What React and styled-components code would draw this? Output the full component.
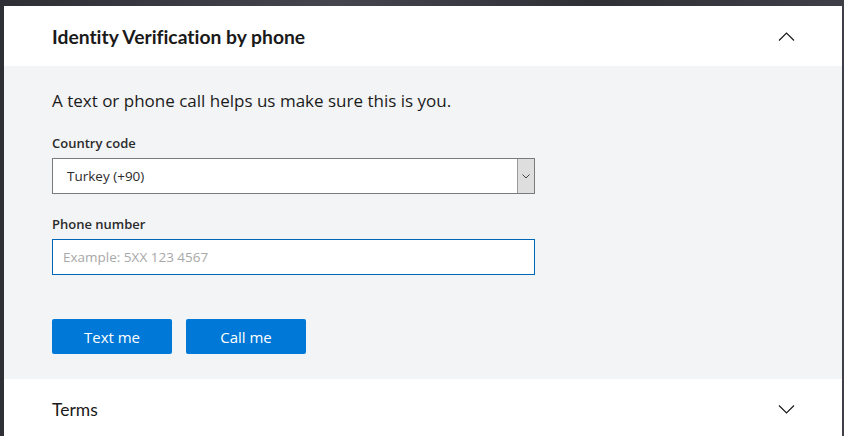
import React, { useState } from 'react'
import styled, { createGlobalStyle } from 'styled-components'

const GlobalStyle = createGlobalStyle`
  html, body {
    margin: 0;
    background: #34343c;
  }
  body {
    font-family: 'Open Sans', 'Noto Sans', sans-serif;
  }
`

const Page = styled.div`
  height: 436px;
  overflow: hidden;
  padding: 6px 2px 0 4px;
  background: linear-gradient(90deg, #2e2e35, #45454e 40%, #2f2f36 70%, #3f3f47);
`
const Panel = styled.section`
  background: #ffffff;
`
const SectionHeader = styled.button`
  all: unset;
  box-sizing: border-box;
  display: flex;
  align-items: center;
  justify-content: space-between;
  width: 100%;
  height: ${(p) => p.$height}px;
  padding: 0 47px 0 48px;
  cursor: pointer;
`
const HeaderTitle = styled.h2`
  margin: 0;
  font-family: 'Lato', sans-serif;
  font-size: ${(p) => (p.$bold ? 19.3 : 17.5)}px;
  font-weight: ${(p) => (p.$bold ? 700 : 400)};
  font-variant-ligatures: none;
  color: #1a1a1a;
`
const Body = styled.div`
  background: #f3f4f6;
  padding: 23px 48px 25px;
`
const Lead = styled.p`
  margin: 0 0 21px;
  font-size: 17px;
  line-height: 24px;
  color: #1b1b1b;
`
const Field = styled.div`
  display: flex;
  flex-direction: column;
  width: 483px;
  margin-bottom: ${(p) => p.$gap}px;
`
const Label = styled.label`
  font-size: 13px;
  font-weight: 600;
  color: #2b2b2b;
  margin-bottom: 6px;
`
const SelectBox = styled.div`
  box-sizing: border-box;
  display: flex;
  height: 36px;
  background: #ffffff;
  border: 1px solid #7a7a7a;
`
const SelectText = styled.span`
  flex: 1;
  display: flex;
  align-items: center;
  padding-left: 14px;
  font-size: 13.5px;
  color: #2b2b2b;
`
const SelectArrow = styled.span`
  display: flex;
  align-items: center;
  justify-content: center;
  width: 16px;
  background: #dedede;
  border-left: 1px solid #9a9a9a;
`
const Input = styled.input`
  box-sizing: border-box;
  height: 36px;
  padding: 0 10px;
  border: 1px solid #0067b8;
  border-radius: 0;
  outline: none;
  background: #ffffff;
  font-family: 'Open Sans', sans-serif;
  font-size: 13.5px;
  color: #1b1b1b;
  &::placeholder {
    color: #a8a8a8;
  }
`
const Actions = styled.div`
  display: flex;
  gap: 14px;
`
const Button = styled.button`
  all: unset;
  box-sizing: border-box;
  width: 120px;
  height: 35px;
  border-radius: 2px;
  background: #0078d7;
  color: #ffffff;
  font-size: 15px;
  text-align: center;
  cursor: pointer;
`

const Chevron = ({ up }) => (
  <svg width="17" height="9" viewBox="0 0 17 9" fill="none">
    <path
      d={up ? 'M1 8.5 L8.5 1 L16 8.5' : 'M1 0.5 L8.5 8 L16 0.5'}
      stroke="#1b1b1b"
      strokeWidth="1.2"
    />
  </svg>
)

const App = () => {
  const [phone, setPhone] = useState('')

  return (
    <>
      <GlobalStyle />
      <Page>
        <Panel>
          <SectionHeader $height={60}>
            <HeaderTitle $bold>Identity Verification by phone</HeaderTitle>
            <Chevron up />
          </SectionHeader>
          <Body>
            <Lead>A text or phone call helps us make sure this is you.</Lead>
            <Field $gap={21}>
              <Label>Country code</Label>
              <SelectBox>
                <SelectText>Turkey (+90)</SelectText>
                <SelectArrow>
                  <svg width="8" height="5" viewBox="0 0 8 5">
                    <path d="M0.5 0.5 L4 4 L7.5 0.5" stroke="#444" fill="none" />
                  </svg>
                </SelectArrow>
              </SelectBox>
            </Field>
            <Field $gap={44}>
              <Label>Phone number</Label>
              <Input
                type="tel"
                value={phone}
                onChange={(e) => setPhone(e.target.value)}
                placeholder="Example: 5XX 123 4567"
                autoFocus
              />
            </Field>
            <Actions>
              <Button>Text me</Button>
              <Button>Call me</Button>
            </Actions>
          </Body>
          <SectionHeader $height={60}>
            <HeaderTitle>Terms</HeaderTitle>
            <Chevron />
          </SectionHeader>
        </Panel>
      </Page>
    </>
  )
}

export default App
